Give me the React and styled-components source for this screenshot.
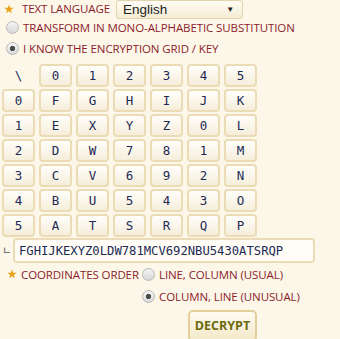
import React from "react";
import styled, { createGlobalStyle } from "styled-components";

const GlobalStyle = createGlobalStyle`
  html, body {
    margin: 0;
    padding: 0;
    background: #fcf7e8;
  }
  body {
    font-family: "Open Sans", "Liberation Sans", sans-serif;
  }
`;

const grid = [
  ["\\", "0", "1", "2", "3", "4", "5"],
  ["0", "F", "G", "H", "I", "J", "K"],
  ["1", "E", "X", "Y", "Z", "0", "L"],
  ["2", "D", "W", "7", "8", "1", "M"],
  ["3", "C", "V", "6", "9", "2", "N"],
  ["4", "B", "U", "5", "4", "3", "O"],
  ["5", "A", "T", "S", "R", "Q", "P"],
];

const Star = () => (
  <StarIcon viewBox="0 0 10 10">
    <path
      d="M5 0.4 L6.2 3.7 L9.7 3.8 L6.9 5.9 L7.9 9.3 L5 7.3 L2.1 9.3 L3.1 5.9 L0.3 3.8 L3.8 3.7 Z"
      fill="#eaa21c"
    />
  </StarIcon>
);

const App = () => {
  return (
    <Page>
      <GlobalStyle />
      <LangRow>
        <Star />
        <Label>TEXT LANGUAGE</Label>
        <Select>
          <span>English</span>
          <Arrow>▼</Arrow>
        </Select>
      </LangRow>

      <RadioRow>
        <Radio />
        <Label>TRANSFORM IN MONO-ALPHABETIC SUBSTITUTION</Label>
      </RadioRow>
      <RadioRow>
        <Radio checked />
        <Label>I KNOW THE ENCRYPTION GRID / KEY</Label>
      </RadioRow>

      <Grid>
        {grid.flatMap((row, r) =>
          row.map((ch, c) =>
            r === 0 && c === 0 ? (
              <Corner key={`${r}-${c}`}>{ch}</Corner>
            ) : (
              <Cell key={`${r}-${c}`}>{ch}</Cell>
            )
          )
        )}
      </Grid>

      <KeyRow>
        <Angle>∟</Angle>
        <KeyInput>FGHIJKEXYZ0LDW781MCV692NBU5430ATSRQP</KeyInput>
      </KeyRow>

      <OrderRow>
        <OrderLabel>
          <Star />
          <Label>COORDINATES ORDER</Label>
        </OrderLabel>
        <Options>
          <Option>
            <Radio />
            <Label>LINE, COLUMN (USUAL)</Label>
          </Option>
          <Option>
            <Radio checked />
            <Label>COLUMN, LINE (UNUSUAL)</Label>
          </Option>
        </Options>
      </OrderRow>

      <ButtonRow>
        <Button>DECRYPT</Button>
      </ButtonRow>
    </Page>
  );
};

const Page = styled.div`
  width: 340px;
  height: 339px;
  overflow: hidden;
  background: #fcf7e8;
`;

const StarIcon = styled.svg`
  width: 10px;
  height: 10px;
  flex: none;
`;

const Label = styled.span`
  color: #8c1c2c;
  font-size: 11.5px;
  letter-spacing: -0.1px;
  white-space: nowrap;
`;

const LangRow = styled.div`
  display: flex;
  align-items: center;
  height: 17px;
  padding-left: 4px;

  ${StarIcon} {
    margin-right: 8px;
  }
`;

const Select = styled.div`
  box-sizing: border-box;
  width: 127px;
  height: 19px;
  margin-left: 6px;
  margin-top: 1px;
  display: flex;
  align-items: center;
  justify-content: space-between;
  padding: 0 8px 0 6px;
  border: 1px solid #e2d4ab;
  border-radius: 3px;
  background: linear-gradient(#fefcf5, #f5ecd4);
  font-family: "Liberation Sans", Arial, sans-serif;
  font-size: 13.5px;
  color: #222;
`;

const Arrow = styled.span`
  font-size: 8px;
  color: #222;
`;

const RadioRow = styled.div`
  display: flex;
  align-items: center;
  gap: 4px;
  height: 21px;
  padding-left: 6px;
`;

const Radio = styled.span`
  box-sizing: border-box;
  width: 13px;
  height: 13px;
  flex: none;
  border-radius: 50%;
  border: 1px solid #b9b9b9;
  background: radial-gradient(
      circle at center,
      ${({ checked }) => (checked ? "#4a4a4a 0 2.4px, transparent 2.9px" : "transparent 0")}
    ),
    linear-gradient(#f4f4f4, #d8d8d8);
`;

const Grid = styled.div`
  display: grid;
  grid-template-columns: repeat(7, 33px);
  grid-auto-rows: 23px;
  column-gap: 4px;
  row-gap: 2px;
  margin: 5px 0 0 2px;
`;

const Cell = styled.div`
  box-sizing: border-box;
  display: flex;
  align-items: center;
  justify-content: center;
  border: 2px solid #ebdcb6;
  border-radius: 4px;
  background: linear-gradient(#fffefa, #f6eedb);
  color: #1c2a55;
  font-family: "DejaVu Sans Mono", monospace;
  font-size: 12.5px;
`;

const Corner = styled(Cell)`
  border-color: transparent;
  background: none;
`;

const KeyRow = styled.div`
  display: flex;
  align-items: center;
  margin-top: 1px;
  padding-left: 3px;
`;

const Angle = styled.span`
  width: 10px;
  color: #555;
  font-family: "DejaVu Sans", sans-serif;
  font-size: 10px;
  line-height: 1;
`;

const KeyInput = styled.div`
  box-sizing: border-box;
  width: 302px;
  height: 25px;
  display: flex;
  align-items: center;
  padding-left: 4px;
  border: 2px solid #ebdcb6;
  border-radius: 4px;
  background: #fffdf6;
  color: #1c2a55;
  font-family: "DejaVu Sans Mono", monospace;
  font-size: 12.2px;
`;

const OrderRow = styled.div`
  display: flex;
`;

const OrderLabel = styled.div`
  display: flex;
  align-items: center;
  gap: 4px;
  height: 22px;
  width: 142px;
  padding-left: 7px;
  box-sizing: border-box;
`;

const Options = styled.div`
  display: flex;
  flex-direction: column;
`;

const Option = styled.div`
  display: flex;
  align-items: center;
  gap: 4px;
  height: 22px;
`;

const ButtonRow = styled.div`
  display: flex;
  padding-left: 188px;
  margin-top: 3px;
`;

const Button = styled.div`
  box-sizing: border-box;
  width: 69px;
  height: 32px;
  display: flex;
  align-items: center;
  justify-content: center;
  padding-bottom: 2px;
  border: 2px solid #e2cf9c;
  border-radius: 5px;
  background: linear-gradient(#fffcf1, #f3e8c8);
  color: #6b6a10;
  font-size: 12.5px;
  font-weight: bold;
`;

export default App;
